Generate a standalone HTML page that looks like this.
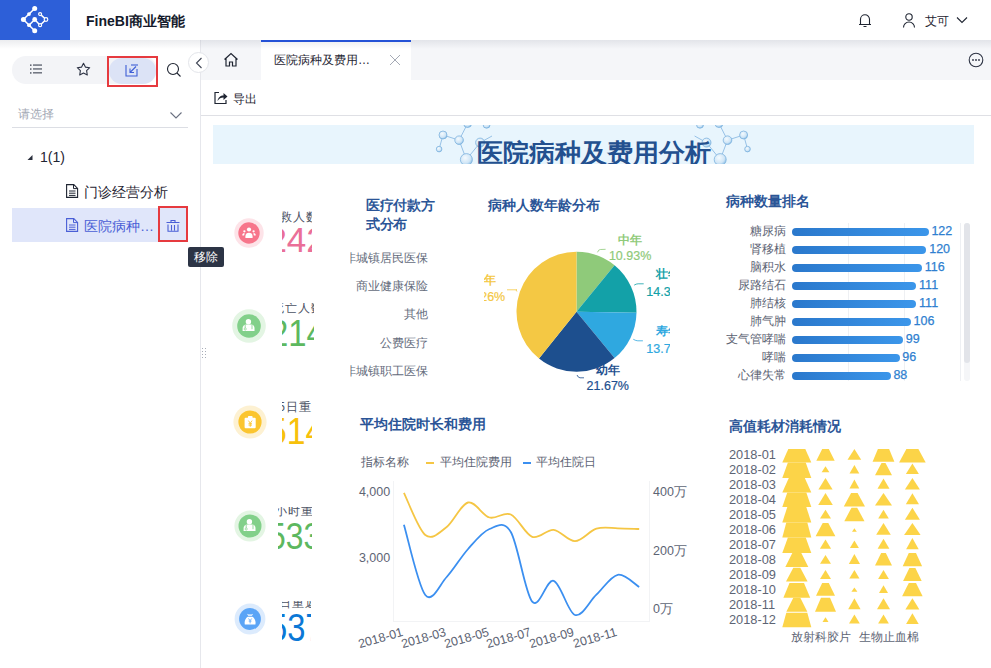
<!DOCTYPE html>
<html><head><meta charset="utf-8">
<style>
*{box-sizing:border-box;margin:0;padding:0}
html,body{width:991px;height:668px;overflow:hidden;background:#fff;font-family:"Liberation Sans",sans-serif;color:#1f2532}
.a{position:absolute}
.t{position:absolute;white-space:nowrap;line-height:1}
</style></head><body>
<!-- HEADER -->
<div class="a" style="left:0;top:0;width:991px;height:40px;background:#fff"></div>
<div class="a" style="left:0;top:0;width:70px;height:40px;background:#2d5fd8"></div>
<svg class="a" style="left:0;top:0" width="70" height="40" viewBox="0 0 70 40">
 <g stroke="#fff" stroke-width="1.5" fill="none">
  <path d="M34.7 8.5L23.4 19.5L34.7 30.8M34.7 19.5L29 25.2M34.7 19.5L40.1 25.2L46 19.5L40.1 14.1"/>
 </g>
 <g fill="#fff"><circle cx="34.7" cy="8.5" r="2.5"/><circle cx="23.4" cy="19.5" r="2.5"/><circle cx="34.7" cy="19.5" r="2.4"/><circle cx="34.7" cy="30.8" r="2.5"/><circle cx="29" cy="14.1" r="1.9"/><circle cx="29" cy="25.2" r="1.9"/></g>
 <g fill="#2d5fd8" stroke="#fff" stroke-width="1.2"><circle cx="40.1" cy="14.1" r="1.5"/><circle cx="46" cy="19.5" r="1.8"/><circle cx="40.1" cy="25.2" r="1.5"/></g>
</svg>
<div class="t" style="left:86px;top:14px;font-size:14px;font-weight:bold;color:#141a2b">FineBI商业智能</div>

<!-- header right -->
<svg class="a" style="left:857px;top:12px" width="16" height="16" viewBox="0 0 16 16"><path d="M3.5 12.5V7.2a4.5 4.5 0 0 1 9 0v5.3M2 12.5h12M6.5 14.5h3" stroke="#1f2532" stroke-width="1.1" fill="none"/></svg>
<svg class="a" style="left:902px;top:12px" width="14" height="16" viewBox="0 0 14 16"><circle cx="7" cy="5" r="3.2" stroke="#1f2532" stroke-width="1.1" fill="none"/><path d="M1.5 15.5a5.5 5.5 0 0 1 11 0" stroke="#1f2532" stroke-width="1.1" fill="none"/></svg>
<div class="t" style="left:925px;top:14.5px;font-size:12px;color:#1f2532">艾可</div>
<svg class="a" style="left:956px;top:15px" width="12" height="10" viewBox="0 0 12 10"><path d="M1 2.5l5 5 5-5" stroke="#1f2532" stroke-width="1.1" fill="none"/></svg>
<!-- header shadow -->


<!-- SIDEBAR -->
<div class="a" style="left:200px;top:40px;width:1px;height:628px;background:#e6e7ec"></div>
<div class="a" style="left:12px;top:56px;width:145px;height:28px;border-radius:14px;background:#f3f4f7"></div>
<div class="a" style="left:109px;top:58px;width:47px;height:26px;border-radius:13px;background:#dce3f6"></div>
<div class="a" style="left:107px;top:56px;width:51px;height:31px;border:2px solid #e63a3f"></div>
<svg class="a" style="left:29px;top:63px" width="14" height="12" viewBox="0 0 14 12"><g fill="#3d4352"><rect x="1" y="1.5" width="1.5" height="1.3"/><rect x="1" y="5.4" width="1.5" height="1.3"/><rect x="1" y="9.3" width="1.5" height="1.3"/><rect x="4" y="1.5" width="9" height="1.1"/><rect x="4" y="5.4" width="9" height="1.1"/><rect x="4" y="9.3" width="9" height="1.1"/></g></svg>
<svg class="a" style="left:76px;top:62px" width="15" height="15" viewBox="0 0 15 15"><path d="M7.5 1.2l1.9 3.9 4.3.6-3.1 3 .7 4.3-3.8-2-3.8 2 .7-4.3-3.1-3 4.3-.6z" stroke="#2d3344" stroke-width="1.1" fill="none" stroke-linejoin="round"/></svg>
<svg class="a" style="left:125px;top:63px" width="14" height="14" viewBox="0 0 14 14"><path d="M1 2v11h11V6" stroke="#3f5fd6" stroke-width="1.1" fill="none"/><path d="M6 2h7" stroke="#3f5fd6" stroke-width="1.1"/><path d="M11 3.5L5 9.5M5 5.5v4h4" stroke="#3f5fd6" stroke-width="1.1" fill="none"/></svg>
<svg class="a" style="left:166px;top:62px" width="16" height="16" viewBox="0 0 16 16"><circle cx="7" cy="7" r="5.5" stroke="#1f2532" stroke-width="1.1" fill="none"/><path d="M11 11l3.5 3.5" stroke="#1f2532" stroke-width="1.1"/></svg>
<div class="t" style="left:18px;top:108px;font-size:12px;color:#a3a8b4">请选择</div>
<svg class="a" style="left:169px;top:110px" width="14" height="10" viewBox="0 0 14 10"><path d="M1.5 2.5l5.5 5.5 5.5-5.5" stroke="#6a7080" stroke-width="1.1" fill="none"/></svg>
<div class="a" style="left:12px;top:127px;width:176px;height:1px;background:#dcdee4"></div>
<svg class="a" style="left:26px;top:153px" width="8" height="8" viewBox="0 0 8 8"><path d="M6.5 2v5h-5z" fill="#2a2f3d"/></svg>
<div class="t" style="left:40px;top:150px;font-size:14px;color:#1f2532">1(1)</div>
<svg class="a" style="left:66px;top:184px" width="13" height="14" viewBox="0 0 13 14"><path d="M.6.6h7.2l3.8 3.8v9H.6z" stroke="#1f2532" stroke-width="1.1" fill="none"/><path d="M7.5.6v4h4M3 7h6.5M3 9.2h6.5M3 11.4h6.5" stroke="#1f2532" stroke-width="1" fill="none"/></svg>
<div class="t" style="left:84px;top:184.5px;font-size:14px;color:#1f2532">门诊经营分析</div>
<div class="a" style="left:12px;top:208px;width:176px;height:34px;background:#e0e6fa"></div>
<svg class="a" style="left:66px;top:218px" width="13" height="14" viewBox="0 0 13 14"><path d="M.6.6h7.2l3.8 3.8v9H.6z" stroke="#4a5fd6" stroke-width="1.1" fill="none"/><path d="M7.5.6v4h4M3 7h6.5M3 9.2h6.5M3 11.4h6.5" stroke="#4a5fd6" stroke-width="1" fill="none"/></svg>
<div class="t" style="left:84px;top:218.5px;font-size:14px;color:#4a5fd6">医院病种…</div>
<div class="a" style="left:158px;top:206px;width:30px;height:36px;border:2px solid #e63a3f"></div>
<svg class="a" style="left:166px;top:218px" width="14" height="14" viewBox="0 0 14 14"><path d="M.5 4.5h13M5 4.5V2.5h4v2M2 6.5v6.8h10V6.5M5.5 7v5.5M8.5 7v5.5" stroke="#4a5fd6" stroke-width="1.1" fill="none"/></svg>
<div class="a" style="left:188px;top:247px;width:36px;height:20px;border-radius:2px;background:#2c3445"></div>
<div class="t" style="left:194px;top:251px;font-size:12px;color:#fff">移除</div>

<!-- TAB BAR -->
<div class="a" style="left:201px;top:40px;width:790px;height:40px;background:#f5f6f9"></div>
<div class="a" style="left:261px;top:40px;width:150px;height:40px;background:#fff"></div>
<div class="a" style="left:0;top:40px;width:991px;height:9px;background:linear-gradient(rgba(30,40,70,0.085),rgba(30,40,70,0))"></div>
<div class="a" style="left:261px;top:40px;width:150px;height:2px;background:#2552d6"></div>
<svg class="a" style="left:223px;top:52px" width="16" height="15" viewBox="0 0 16 15"><path d="M1.5 7.5L8 1.5l6.5 6M3 6.5v7.5h3.5V10h3v4H13V6.5" stroke="#1f2532" stroke-width="1.2" fill="none"/></svg>
<div class="t" style="left:274px;top:54px;font-size:12px;color:#1f2532">医院病种及费用…</div>
<svg class="a" style="left:389px;top:54px" width="12" height="12" viewBox="0 0 12 12"><path d="M1 1l10 10M11 1L1 11" stroke="#a5aab5" stroke-width="1"/></svg>
<svg class="a" style="left:968px;top:52px" width="16" height="16" viewBox="0 0 16 16"><circle cx="8" cy="8" r="6.8" stroke="#2d3344" stroke-width="1.1" fill="none"/><circle cx="5" cy="8" r=".9" fill="#2d3344"/><circle cx="8" cy="8" r=".9" fill="#2d3344"/><circle cx="11" cy="8" r=".9" fill="#2d3344"/></svg>
<div class="a" style="left:188px;top:52px;width:21px;height:21px;border-radius:50%;background:#fff;border:1px solid #e3e5ea"></div>
<svg class="a" style="left:194px;top:57px" width="10" height="12" viewBox="0 0 10 12"><path d="M7.5 1L2.5 6l5 5" stroke="#3f4555" stroke-width="1.1" fill="none"/></svg>

<!-- TOOLBAR -->
<svg class="a" style="left:214px;top:91px" width="14" height="14" viewBox="0 0 14 14"><path d="M5 1.5H1v11h11V9" stroke="#1f2532" stroke-width="1.2" fill="none"/><path d="M3.5 10c.5-3.5 3-5.5 6-5.5V2l4 3.5-4 3.5V6.5c-2.5 0-4.5 1-6 3.5z" fill="#1f2532"/></svg>
<div class="t" style="left:233px;top:92.5px;font-size:12px;color:#1f2532">导出</div>
<div class="a" style="left:201px;top:115px;width:790px;height:1px;background:#dfe0e5"></div>
<!-- drag handle -->
<svg class="a" style="left:201px;top:347px" width="6" height="12" viewBox="0 0 6 12"><g fill="#a8adb8"><rect x="1" y="1" width="1" height="1"/><rect x="4" y="1" width="1" height="1"/><rect x="1" y="4" width="1" height="1"/><rect x="4" y="4" width="1" height="1"/><rect x="1" y="7" width="1" height="1"/><rect x="4" y="7" width="1" height="1"/><rect x="1" y="10" width="1" height="1"/><rect x="4" y="10" width="1" height="1"/></g></svg>

<!-- TITLE BANNER -->
<div class="a" style="left:213px;top:125px;width:761px;height:39px;background:#e8f5fd"></div>
<svg class="a" style="left:213px;top:125px" width="761" height="39" viewBox="0 0 761 39">
<defs><radialGradient id="ball" cx="40%" cy="35%" r="65%"><stop offset="0" stop-color="#f4fafe"/><stop offset="0.7" stop-color="#cfe5f6"/><stop offset="1" stop-color="#8fc0e6"/></radialGradient></defs>
<g stroke="#8dbbe3" stroke-width="0.9"><line x1="230.0" y1="10.0" x2="246.1" y2="15.2"/><line x1="230.0" y1="10.0" x2="226.1" y2="24.1"/><line x1="246.1" y1="15.2" x2="254.6" y2="-1.5"/><line x1="246.1" y1="15.2" x2="253.4" y2="34.6"/><line x1="253.4" y1="34.6" x2="267.1" y2="17.6"/><line x1="267.1" y1="17.6" x2="279.0" y2="11.0"/><line x1="530.6" y1="10.0" x2="514.5" y2="15.2"/><line x1="530.6" y1="10.0" x2="534.5" y2="24.1"/><line x1="514.5" y1="15.2" x2="506.0" y2="-1.5"/><line x1="514.5" y1="15.2" x2="507.2" y2="34.6"/><line x1="507.2" y1="34.6" x2="493.5" y2="17.6"/><line x1="493.5" y1="17.6" x2="481.6" y2="11.0"/></g>
<g fill="url(#ball)" stroke="#7db2de" stroke-width="0.8"><circle cx="230.0" cy="10.0" r="4"/><circle cx="246.1" cy="15.2" r="4.3"/><circle cx="226.1" cy="24.1" r="2.8"/><circle cx="253.4" cy="34.6" r="6"/><circle cx="267.1" cy="17.6" r="4.5"/><circle cx="254.6" cy="-1.5" r="4"/><circle cx="273.6" cy="-0.3" r="3.5"/><circle cx="530.6" cy="10.0" r="4"/><circle cx="514.5" cy="15.2" r="4.3"/><circle cx="534.5" cy="24.1" r="2.8"/><circle cx="507.2" cy="34.6" r="6"/><circle cx="493.5" cy="17.6" r="4.5"/><circle cx="506.0" cy="-1.5" r="4"/><circle cx="487.0" cy="-0.3" r="3.5"/></g>
</svg>
<div class="a" style="left:213px;top:125px;width:761px;height:39px;overflow:hidden"><div class="t" style="left:264px;top:15px;font-size:26px;font-weight:bold;color:#23508f">医院病种及费用分析</div></div>
<svg class="a" style="left:228.8px;top:213.4px" width="40" height="40" viewBox="-20 -20 40 40"><circle r="14.7" fill="#fde3e8"/><circle r="10.7" fill="#f7768b"/><g fill="#fff"><circle cx="0" cy="-3.5" r="2.1"/><path d="M-3.6 5v-1.6c0-2.6 1.6-3.6 3.6-3.6s3.6 1 3.6 3.6V5z"/><circle cx="-4.6" cy="-1.7" r="1.15"/><path d="M-6.7 2.6v-.6c0-1.2.7-1.8 1.5-1.8h.9l-.6 2.4z"/><circle cx="4.6" cy="-1.7" r="1.15"/><path d="M6.7 2.6v-.6c0-1.2-.7-1.8-1.5-1.8h-.9l.6 2.4z"/></g></svg>
<div class="a" style="left:281.6px;top:211px;width:30.4px;height:48.9px;overflow:hidden"><div class="t" style="left:-14.6px;top:-0.4px;font-size:12px;letter-spacing:1px;color:#4b5263">抢救人数</div><div class="t" style="left:-14.2px;top:11.3px;font-size:35px;color:#ea6f98;transform-origin:0 0;transform:scaleX(1.0)">242</div></div>
<svg class="a" style="left:228.9px;top:306.3px" width="40" height="40" viewBox="-20 -20 40 40"><circle r="16.8" fill="#e3f5e3"/><circle r="11.8" fill="#82d08a"/><g fill="#fff"><circle cx="-0.6" cy="-4.3" r="2.7"/><path d="M-6.4 4.9v-2.8c0-2.3 1.8-3.7 3.5-3.7h5.2c1.7 0 3.2 1.4 3.2 3.7v2.8z"/><path d="M-3.8-1.3v3.2M3 -1.3v4.5" stroke="#82d08a" stroke-width=".8" fill="none"/><circle cx="-3.8" cy="3" r="1.1" fill="none" stroke="#82d08a" stroke-width=".7"/></g></svg>
<div class="a" style="left:281.6px;top:302.5px;width:32.4px;height:51.5px;overflow:hidden"><div class="t" style="left:-9.6px;top:-0.5px;font-size:12px;letter-spacing:1px;color:#4b5263">死亡人数</div><div class="t" style="left:-11.6px;top:13.7px;font-size:36.5px;color:#5db85f;transform-origin:0 0;transform:scaleX(0.9)">214</div></div>
<svg class="a" style="left:230.4px;top:402.4px" width="40" height="40" viewBox="-20 -20 40 40"><circle r="16.6" fill="#fdf1d2"/><circle r="11.6" fill="#fbc52f"/><g fill="#fff"><rect x="-5.4" y="-4.3" width="11.1" height="10.6" rx="1"/><rect x="-2.1" y="-6.1" width="4.7" height="2.8" rx="1"/><path d="M-1.6-1.4L.25 1.2L2.1-1.4M.25 1.2v3.6M-1.5 1.7h3.5M-1.5 3.1h3.5" stroke="#fbc52f" stroke-width=".9" fill="none"/></g></svg>
<div class="a" style="left:281.6px;top:400px;width:30.4px;height:50.5px;overflow:hidden"><div class="t" style="left:-11.0px;top:0.6px;font-size:12px;letter-spacing:1px;color:#4b5263">15日重返</div><div class="t" style="left:-13.6px;top:12.5px;font-size:37.5px;color:#f7c10b;transform-origin:0 0;transform:scaleX(0.9)">514</div></div>
<svg class="a" style="left:229.7px;top:505.7px" width="40" height="40" viewBox="-20 -20 40 40"><circle r="15.6" fill="#e3f5e3"/><circle r="11.5" fill="#82d08a"/><g fill="#fff"><circle cx="-0.6" cy="-4.3" r="2.7"/><path d="M-6.4 4.9v-2.8c0-2.3 1.8-3.7 3.5-3.7h5.2c1.7 0 3.2 1.4 3.2 3.7v2.8z"/><path d="M-3.8-1.3v3.2M3 -1.3v4.5" stroke="#82d08a" stroke-width=".8" fill="none"/><circle cx="-3.8" cy="3" r="1.1" fill="none" stroke="#82d08a" stroke-width=".7"/></g></svg>
<div class="a" style="left:277.7px;top:507px;width:34.3px;height:48.5px;overflow:hidden"><div class="t" style="left:-18.2px;top:-2.0px;font-size:12px;letter-spacing:1px;color:#4b5263">24小时重返</div><div class="t" style="left:-10.1px;top:10.6px;font-size:37px;color:#5db85f;transform-origin:0 0;transform:scaleX(0.86)">533</div></div>
<svg class="a" style="left:229.9px;top:599.3px" width="40" height="40" viewBox="-20 -20 40 40"><circle r="15.4" fill="#dcebfd"/><circle r="10.9" fill="#5aa4f6"/><g fill="#fff"><path d="M-3-5.3c1 .6 2 .9 3 .9s2-.3 3.1-.9l-1.2 2.1h-3.7z"/><path d="M-2.3-2.2h4.8c1.8 1.3 3 3.3 3.1 5.9l-.2 1.9h-10.6l-.2-1.9c.1-2.6 1.3-4.6 3.1-5.9z"/><path d="M-1.5-.5L.1 1.6L1.7-.5M.1 1.6v2.8M-1.3 2.1h2.8" stroke="#5aa4f6" stroke-width=".8" fill="none"/></g></svg>
<div class="a" style="left:281.6px;top:600.5px;width:29.9px;height:46.5px;overflow:hidden"><div class="t" style="left:-18.2px;top:-4.0px;font-size:12px;letter-spacing:1px;color:#4b5263">31日重返</div><div class="t" style="left:-12.4px;top:8.4px;font-size:38px;color:#0b78d6;transform-origin:0 0;transform:scaleX(0.86)">537</div></div>
<div class="t" style="left:366px;top:195.5px;font-size:13.5px;letter-spacing:-0.3px;font-weight:bold;color:#2b5597;line-height:19.3px">医疗付款方<br>式分布</div>
<div class="a" style="left:350px;top:240px;width:80px;height:150px;overflow:hidden">
<div class="t" style="right:2.5px;top:12.0px;font-size:12px;color:#656c7c">非城镇居民医保</div>
<div class="t" style="right:2.5px;top:40.4px;font-size:12px;color:#656c7c">商业健康保险</div>
<div class="t" style="right:2.5px;top:68.4px;font-size:12px;color:#656c7c">其他</div>
<div class="t" style="right:2.5px;top:97.0px;font-size:12px;color:#656c7c">公费医疗</div>
<div class="t" style="right:2.5px;top:125.0px;font-size:12px;color:#656c7c">非城镇职工医保</div>
</div>
<div class="t" style="left:488px;top:199px;font-size:13.5px;font-weight:bold;color:#2b5597">病种人数年龄分布</div>
<div class="a" style="left:484px;top:230px;width:186px;height:165px;overflow:hidden">
<div class="t" style="left:106.1px;width:80px;text-align:center;top:5.2px;font-size:11.5px;font-weight:bold;color:#8fca7a">中年</div>
<div class="t" style="left:106.1px;width:80px;text-align:center;top:20.1px;font-size:12.5px;color:#8fca7a;-webkit-text-stroke:0.2px #8fca7a">10.93%</div>
<div class="t" style="left:143.5px;width:80px;text-align:center;top:39.1px;font-size:11.5px;font-weight:bold;color:#13a1a8">壮年</div>
<div class="t" style="left:143.5px;width:80px;text-align:center;top:56.1px;font-size:12.5px;color:#13a1a8;-webkit-text-stroke:0.2px #13a1a8">14.38%</div>
<div class="t" style="left:143.5px;width:80px;text-align:center;top:96.4px;font-size:11.5px;font-weight:bold;color:#2fa8e0">寿年</div>
<div class="t" style="left:143.5px;width:80px;text-align:center;top:112.5px;font-size:12.5px;color:#2fa8e0;-webkit-text-stroke:0.2px #2fa8e0">13.76%</div>
<div class="t" style="left:83.8px;width:80px;text-align:center;top:134.6px;font-size:11.5px;font-weight:bold;color:#1d4f8e">幼年</div>
<div class="t" style="left:83.8px;width:80px;text-align:center;top:150.3px;font-size:12.5px;color:#1d4f8e;-webkit-text-stroke:0.2px #1d4f8e">21.67%</div>
<div class="t" style="left:-40.0px;width:80px;text-align:center;top:44.9px;font-size:11.5px;font-weight:bold;color:#f4c844">青年</div>
<div class="t" style="left:-40.0px;width:80px;text-align:center;top:61.1px;font-size:12.5px;color:#f4c844;-webkit-text-stroke:0.2px #f4c844">39.26%</div>
<svg class="a" style="left:0;top:0" width="186" height="165"><path d="M92.50 81.70L92.50 21.70A60 60 0 0 1 130.54 35.30Z" fill="#8fca7a"/><path d="M92.50 81.70L130.54 35.30A60 60 0 0 1 152.49 82.87Z" fill="#13a1a8"/><path d="M92.50 81.70L152.49 82.87A60 60 0 0 1 130.54 128.10Z" fill="#2fa8e0"/><path d="M92.50 81.70L130.54 128.10A60 60 0 0 1 55.01 128.55Z" fill="#1d4f8e"/><path d="M92.50 81.70L55.01 128.55A60 60 0 0 1 92.50 21.70Z" fill="#f4c844"/><path d="M113.5 22.3Q114.5 19.5 116.3 19.5L121.6 19.3" stroke="#8fca7a" stroke-width="1" fill="none" opacity="0.8"/><path d="M150.2 55.1Q152.3 53.8 154.1 53.8L159.7 53.8" stroke="#13a1a8" stroke-width="1" fill="none" opacity="0.8"/><path d="M149.3 109.3Q152.0 110.8 153.8 110.8L158.9 110.8" stroke="#2fa8e0" stroke-width="1" fill="none" opacity="0.8"/><path d="M93.0 145.0Q94.2 147.8 96.0 147.8L100.0 147.8" stroke="#1d4f8e" stroke-width="1" fill="none" opacity="0.8"/><path d="M32.9 61.5Q31.2 59.8 33.0 59.8L23.0 59.8" stroke="#f4c844" stroke-width="1" fill="none" opacity="0.8"/></svg>
</div>
<div class="t" style="left:726px;top:195px;font-size:13.5px;font-weight:bold;color:#2b5597">病种数量排名</div>
<div class="a" style="left:848px;top:223px;width:1px;height:158px;background:#eef0f3"></div>
<div class="a" style="left:904px;top:223px;width:1px;height:158px;background:#eef0f3"></div>
<div class="a" style="left:960px;top:223px;width:1px;height:158px;background:#eef0f3"></div>
<div class="a" style="left:964px;top:223px;width:6px;height:158px;border-radius:3px;background:#f5f6f8"></div>
<div class="a" style="left:964px;top:223px;width:6px;height:140px;border-radius:3px;background:#e2e4e9"></div>
<div class="t" style="right:204.7px;top:225.3px;font-size:12px;color:#5d6474">糖尿病</div>
<div class="a" style="left:792px;top:228.1px;width:136.6px;height:8px;border-radius:4px;background:linear-gradient(90deg,#2a78cc,#3b96ea)"></div>
<div class="t" style="left:931.4px;top:225.3px;font-size:12.5px;color:#2f7fd0;-webkit-text-stroke:0.25px #2f7fd0">122</div>
<div class="t" style="right:204.7px;top:243.3px;font-size:12px;color:#5d6474">肾移植</div>
<div class="a" style="left:792px;top:246.1px;width:134.4px;height:8px;border-radius:4px;background:linear-gradient(90deg,#2a78cc,#3b96ea)"></div>
<div class="t" style="left:929.2px;top:243.3px;font-size:12.5px;color:#2f7fd0;-webkit-text-stroke:0.25px #2f7fd0">120</div>
<div class="t" style="right:204.7px;top:261.3px;font-size:12px;color:#5d6474">脑积水</div>
<div class="a" style="left:792px;top:264.1px;width:129.9px;height:8px;border-radius:4px;background:linear-gradient(90deg,#2a78cc,#3b96ea)"></div>
<div class="t" style="left:924.7px;top:261.3px;font-size:12.5px;color:#2f7fd0;-webkit-text-stroke:0.25px #2f7fd0">116</div>
<div class="t" style="right:204.7px;top:279.3px;font-size:12px;color:#5d6474">尿路结石</div>
<div class="a" style="left:792px;top:282.1px;width:124.3px;height:8px;border-radius:4px;background:linear-gradient(90deg,#2a78cc,#3b96ea)"></div>
<div class="t" style="left:919.1px;top:279.3px;font-size:12.5px;color:#2f7fd0;-webkit-text-stroke:0.25px #2f7fd0">111</div>
<div class="t" style="right:204.7px;top:297.3px;font-size:12px;color:#5d6474">肺结核</div>
<div class="a" style="left:792px;top:300.1px;width:124.3px;height:8px;border-radius:4px;background:linear-gradient(90deg,#2a78cc,#3b96ea)"></div>
<div class="t" style="left:919.1px;top:297.3px;font-size:12.5px;color:#2f7fd0;-webkit-text-stroke:0.25px #2f7fd0">111</div>
<div class="t" style="right:204.7px;top:315.3px;font-size:12px;color:#5d6474">肺气肿</div>
<div class="a" style="left:792px;top:318.1px;width:118.7px;height:8px;border-radius:4px;background:linear-gradient(90deg,#2a78cc,#3b96ea)"></div>
<div class="t" style="left:913.5px;top:315.3px;font-size:12.5px;color:#2f7fd0;-webkit-text-stroke:0.25px #2f7fd0">106</div>
<div class="t" style="right:204.7px;top:333.3px;font-size:12px;color:#5d6474">支气管哮喘</div>
<div class="a" style="left:792px;top:336.1px;width:110.9px;height:8px;border-radius:4px;background:linear-gradient(90deg,#2a78cc,#3b96ea)"></div>
<div class="t" style="left:905.7px;top:333.3px;font-size:12.5px;color:#2f7fd0;-webkit-text-stroke:0.25px #2f7fd0">99</div>
<div class="t" style="right:204.7px;top:351.3px;font-size:12px;color:#5d6474">哮喘</div>
<div class="a" style="left:792px;top:354.1px;width:107.5px;height:8px;border-radius:4px;background:linear-gradient(90deg,#2a78cc,#3b96ea)"></div>
<div class="t" style="left:902.3px;top:351.3px;font-size:12.5px;color:#2f7fd0;-webkit-text-stroke:0.25px #2f7fd0">96</div>
<div class="t" style="right:204.7px;top:369.3px;font-size:12px;color:#5d6474">心律失常</div>
<div class="a" style="left:792px;top:372.1px;width:98.6px;height:8px;border-radius:4px;background:linear-gradient(90deg,#2a78cc,#3b96ea)"></div>
<div class="t" style="left:893.4px;top:369.3px;font-size:12.5px;color:#2f7fd0;-webkit-text-stroke:0.25px #2f7fd0">88</div>
<div class="t" style="left:360px;top:418px;font-size:13.5px;font-weight:bold;color:#2b5597">平均住院时长和费用</div>
<div class="t" style="left:361px;top:456px;font-size:12px;color:#5d6474">指标名称</div>
<div class="a" style="left:426px;top:462px;width:8px;height:2px;background:#f5c644"></div>
<div class="t" style="left:440px;top:456px;font-size:12px;color:#5d6474">平均住院费用</div>
<div class="a" style="left:522.5px;top:462px;width:8px;height:2px;background:#3b8ff0"></div>
<div class="t" style="left:536px;top:456px;font-size:12px;color:#5d6474">平均住院日</div>
<div class="t" style="right:600.8px;top:486.0px;font-size:12.5px;color:#5d6474">4,000</div>
<div class="t" style="right:600.8px;top:552.0px;font-size:12.5px;color:#5d6474">3,000</div>
<div class="t" style="left:653px;top:485.5px;font-size:12.5px;color:#5d6474">400万</div>
<div class="t" style="left:653px;top:544.5px;font-size:12.5px;color:#5d6474">200万</div>
<div class="t" style="left:653px;top:602.7px;font-size:12.5px;color:#5d6474">0万</div>
<div class="a" style="left:393px;top:481px;width:1px;height:141px;background:#f2f3f5"></div>
<div class="a" style="left:649px;top:481px;width:1px;height:141px;background:#f2f3f5"></div>
<div class="a" style="left:393px;top:621px;width:257px;height:1px;background:#f2f3f5"></div>
<svg class="a" style="left:0;top:0" width="991" height="668"><path d="M403.9 492.8C407.5 499.8 418.2 529.3 425.3 535.0C432.4 540.7 439.5 532.4 446.7 527.0C453.8 521.6 460.9 504.1 468.1 502.5C475.2 500.9 482.3 515.5 489.5 517.5C496.6 519.5 503.7 511.3 510.8 514.5C518.0 517.7 525.1 534.2 532.2 536.8C539.4 539.4 546.5 529.2 553.6 529.9C560.8 530.6 567.9 541.4 575.0 541.2C582.1 541.0 589.3 530.9 596.4 528.7C603.5 526.6 610.7 528.2 617.8 528.3C624.9 528.3 635.6 528.9 639.2 529.0" stroke="#f5c644" stroke-width="1.8" fill="none"/><path d="M403.9 524.7C407.5 536.4 418.2 586.3 425.3 595.0C432.4 603.7 439.5 584.7 446.7 577.0C453.8 569.3 460.9 557.0 468.1 549.0C475.2 541.0 482.3 531.8 489.5 529.0C496.6 526.2 503.7 519.9 510.8 532.0C518.0 544.1 525.1 593.6 532.2 601.7C539.4 609.8 546.5 578.6 553.6 580.8C560.8 583.0 567.9 612.7 575.0 615.0C582.1 617.3 589.3 601.4 596.4 594.7C603.5 588.0 610.7 576.1 617.8 574.8C624.9 573.5 635.6 585.0 639.2 587.0" stroke="#3b8ff0" stroke-width="1.8" fill="none"/></svg>
<div class="t" style="left:352.9px;top:626.0px;width:48px;text-align:right;font-size:12.5px;color:#5d6474;transform-origin:100% 0;transform:rotate(-16deg)">2018-01</div>
<div class="t" style="left:395.7px;top:626.0px;width:48px;text-align:right;font-size:12.5px;color:#5d6474;transform-origin:100% 0;transform:rotate(-16deg)">2018-03</div>
<div class="t" style="left:438.5px;top:626.0px;width:48px;text-align:right;font-size:12.5px;color:#5d6474;transform-origin:100% 0;transform:rotate(-16deg)">2018-05</div>
<div class="t" style="left:481.2px;top:626.0px;width:48px;text-align:right;font-size:12.5px;color:#5d6474;transform-origin:100% 0;transform:rotate(-16deg)">2018-07</div>
<div class="t" style="left:524.0px;top:626.0px;width:48px;text-align:right;font-size:12.5px;color:#5d6474;transform-origin:100% 0;transform:rotate(-16deg)">2018-09</div>
<div class="t" style="left:566.8px;top:626.0px;width:48px;text-align:right;font-size:12.5px;color:#5d6474;transform-origin:100% 0;transform:rotate(-16deg)">2018-11</div>
<div class="t" style="left:729px;top:420px;font-size:13.5px;font-weight:bold;color:#2b5597">高值耗材消耗情况</div>
<div class="t" style="left:729px;top:448.8px;font-size:12.8px;color:#5d6474">2018-01</div>
<div class="t" style="left:729px;top:463.8px;font-size:12.8px;color:#5d6474">2018-02</div>
<div class="t" style="left:729px;top:478.8px;font-size:12.8px;color:#5d6474">2018-03</div>
<div class="t" style="left:729px;top:493.8px;font-size:12.8px;color:#5d6474">2018-04</div>
<div class="t" style="left:729px;top:508.8px;font-size:12.8px;color:#5d6474">2018-05</div>
<div class="t" style="left:729px;top:523.8px;font-size:12.8px;color:#5d6474">2018-06</div>
<div class="t" style="left:729px;top:538.8px;font-size:12.8px;color:#5d6474">2018-07</div>
<div class="t" style="left:729px;top:553.8px;font-size:12.8px;color:#5d6474">2018-08</div>
<div class="t" style="left:729px;top:568.8px;font-size:12.8px;color:#5d6474">2018-09</div>
<div class="t" style="left:729px;top:583.8px;font-size:12.8px;color:#5d6474">2018-10</div>
<div class="t" style="left:729px;top:598.8px;font-size:12.8px;color:#5d6474">2018-11</div>
<div class="t" style="left:729px;top:613.8px;font-size:12.8px;color:#5d6474">2018-12</div>
<svg class="a" style="left:0;top:0" width="991" height="668"><g fill="#fcd448"><polygon points="788.3,448.9 805.3,448.9 811.3,462.6 782.3,462.6"/><polygon points="822.2,448.9 828.8,448.9 834.7,460.7 816.3,460.7"/><polygon points="854.4,448.9 854.4,448.9 861.2,459.7 847.5,459.7"/><polygon points="877.9,448.9 889.1,448.9 894.4,461.8 872.6,461.8"/><polygon points="906.4,448.9 918.4,448.9 925.7,462.6 899.1,462.6"/><polygon points="787.9,462.6 805.7,462.6 811.3,478.0 782.3,478.0"/><polygon points="825.5,466.3 825.5,466.3 829.4,472.3 821.6,472.3"/><polygon points="854.4,465.0 854.4,465.0 859.3,473.6 849.5,473.6"/><polygon points="881.5,463.1 885.5,463.1 892.0,475.2 875.0,475.2"/><polygon points="912.4,463.4 912.4,463.4 918.9,473.9 905.9,473.9"/><polygon points="788.8,478.0 804.8,478.0 811.3,492.5 782.3,492.5"/><polygon points="825.5,478.0 825.5,478.0 832.6,489.6 818.4,489.6"/><polygon points="854.4,479.6 854.4,479.6 859.3,488.4 849.5,488.4"/><polygon points="883.5,478.4 883.5,478.4 889.5,488.8 877.5,488.8"/><polygon points="912.4,478.0 912.4,478.0 919.9,489.6 904.9,489.6"/><polygon points="787.3,492.5 806.3,492.5 811.3,507.0 782.3,507.0"/><polygon points="825.5,493.0 825.5,493.0 832.8,504.9 818.2,504.9"/><polygon points="851.1,493.0 857.6,493.0 865.0,506.5 843.8,506.5"/><polygon points="883.5,493.0 883.5,493.0 892.0,505.4 875.0,505.4"/><polygon points="912.4,493.3 912.4,493.3 919.0,504.3 905.8,504.3"/><polygon points="787.3,507.0 806.3,507.0 811.3,522.6 782.3,522.6"/><polygon points="825.5,509.7 825.5,509.7 831.0,518.6 820.0,518.6"/><polygon points="851.5,507.7 857.2,507.7 864.5,521.3 844.3,521.3"/><polygon points="883.5,509.7 883.5,509.7 888.8,518.6 878.2,518.6"/><polygon points="912.4,507.7 912.4,507.7 919.9,519.7 904.9,519.7"/><polygon points="786.3,522.6 807.3,522.6 811.3,537.5 782.3,537.5"/><polygon points="822.7,522.9 828.3,522.9 835.4,536.3 815.6,536.3"/><polygon points="854.4,528.3 854.4,528.3 856.8,531.8 852.0,531.8"/><polygon points="883.5,522.9 883.5,522.9 890.8,534.7 876.2,534.7"/><polygon points="912.4,522.9 912.4,522.9 920.6,535.0 904.1,535.0"/><polygon points="787.9,537.5 805.7,537.5 811.3,553.0 782.3,553.0"/><polygon points="825.5,539.5 825.5,539.5 831.1,548.8 819.9,548.8"/><polygon points="854.4,540.4 854.4,540.4 858.9,548.0 849.9,548.0"/><polygon points="883.5,538.7 883.5,538.7 889.4,548.8 877.6,548.8"/><polygon points="912.4,537.9 912.4,537.9 918.7,549.2 906.1,549.2"/><polygon points="792.3,553.0 801.3,553.0 808.3,567.0 785.3,567.0"/><polygon points="825.5,554.9 825.5,554.9 831.0,563.8 820.0,563.8"/><polygon points="854.4,554.1 854.4,554.1 860.0,564.1 848.8,564.1"/><polygon points="881.2,553.0 885.8,553.0 892.0,565.4 875.0,565.4"/><polygon points="908.8,553.0 916.0,553.0 922.1,566.2 902.7,566.2"/><polygon points="793.3,567.8 800.3,567.8 807.6,581.6 786.0,581.6"/><polygon points="825.5,570.0 825.5,570.0 831.0,578.9 820.0,578.9"/><polygon points="854.4,570.0 854.4,570.0 859.5,578.4 849.3,578.4"/><polygon points="883.5,570.0 883.5,570.0 888.9,578.9 878.1,578.9"/><polygon points="909.4,568.0 915.4,568.0 921.7,581.0 903.1,581.0"/><polygon points="789.5,582.9 804.0,582.9 810.2,597.8 783.4,597.8"/><polygon points="822.2,582.9 828.8,582.9 835.0,595.8 816.0,595.8"/><polygon points="854.4,587.4 854.4,587.4 857.4,591.8 851.4,591.8"/><polygon points="883.5,585.3 883.5,585.3 888.0,592.9 879.0,592.9"/><polygon points="908.8,582.9 916.0,582.9 922.6,596.2 902.1,596.2"/><polygon points="793.3,597.8 800.3,597.8 807.3,611.7 786.3,611.7"/><polygon points="821.0,597.8 830.0,597.8 836.0,611.7 815.0,611.7"/><polygon points="854.4,598.3 854.4,598.3 860.6,609.2 848.2,609.2"/><polygon points="883.5,598.3 883.5,598.3 890.0,609.2 877.0,609.2"/><polygon points="912.4,598.3 912.4,598.3 919.4,609.6 905.4,609.6"/><polygon points="786.3,612.8 807.3,612.8 811.3,627.3 782.3,627.3"/><polygon points="825.5,617.3 825.5,617.3 828.5,622.0 822.5,622.0"/><polygon points="854.4,614.4 854.4,614.4 859.8,623.6 849.0,623.6"/><polygon points="883.5,614.4 883.5,614.4 888.9,623.6 878.1,623.6"/><polygon points="912.4,613.3 912.4,613.3 918.7,624.1 906.1,624.1"/></g></svg>
<div class="t" style="left:791px;top:631px;font-size:12px;color:#5d6474">放射科胶片</div>
<div class="t" style="left:859px;top:631px;font-size:12px;color:#5d6474">生物止血棉</div>
</body></html>
